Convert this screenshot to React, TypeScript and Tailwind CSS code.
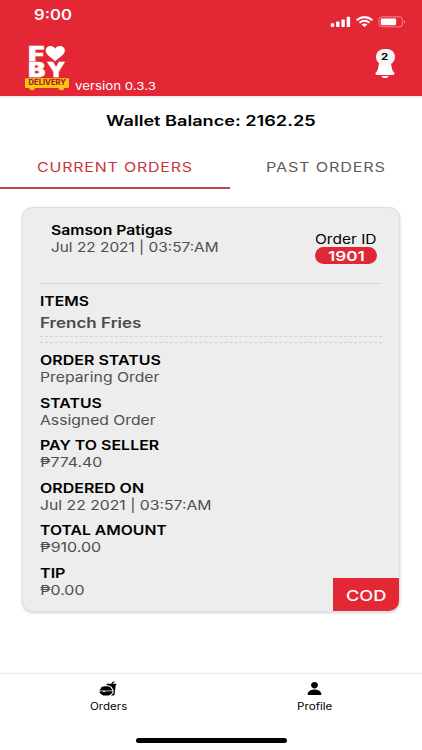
import React, { useLayoutEffect, useRef, useState } from 'react';
import { IoFastFood, IoPerson } from 'react-icons/io5';

type WideTextProps = {
  width: number;
  className?: string;
  children: React.ReactNode;
};

// Single line of text stretched horizontally to the given width
const WideText = ({ width, className = '', children }: WideTextProps) => {
  const ref = useRef<HTMLSpanElement>(null);
  const [scale, setScale] = useState(1);

  useLayoutEffect(() => {
    if (ref.current) setScale(width / ref.current.offsetWidth);
  }, [width]);

  return (
    <div className={`whitespace-nowrap ${className}`} style={{ width }}>
      <span ref={ref} className="inline-block origin-left" style={{ transform: `scaleX(${scale})` }}>
        {children}
      </span>
    </div>
  );
};

const details = [
  { label: 'ORDER STATUS', labelWidth: 120.5, value: 'Preparing Order', valueWidth: 120 },
  { label: 'STATUS', labelWidth: 62, value: 'Assigned Order', valueWidth: 116 },
  { label: 'PAY TO SELLER', labelWidth: 119, value: '₱774.40', valueWidth: 62 },
  { label: 'ORDERED ON', labelWidth: 104.5, value: 'Jul 22 2021 | 03:57:AM', valueWidth: 172 },
  { label: 'TOTAL AMOUNT', labelWidth: 127, value: '₱910.00', valueWidth: 61.5 },
  { label: 'TIP', labelWidth: 26, value: '₱0.00', valueWidth: 44 },
];

const Logo = () => (
  <svg className="h-[46px] w-[46px] overflow-visible" viewBox="0 0 46 46">
    <g fill="#fff" stroke="#fff" strokeWidth="0.5" fontFamily="Inter, sans-serif" fontWeight="900" fontSize="20">
      <text x="3.3" y="15.7" textLength="16" lengthAdjust="spacingAndGlyphs">F</text>
      <text x="3.3" y="32" textLength="17" lengthAdjust="spacingAndGlyphs">B</text>
      <text x="22" y="32" textLength="18" lengthAdjust="spacingAndGlyphs">Y</text>
    </g>
    <path
      d="M30.2 16.3 C27 13 20.7 10 20.7 5.6 C20.7 2.8 23 1 25.5 1 C27.6 1 29.4 2 30.2 3.8 C31 2 32.8 1 35 1 C37.6 1 39.9 2.8 39.9 5.6 C39.9 10 33.4 13 30.2 16.3 Z"
      fill="#fff"
    />
    <rect x="0" y="33.3" width="44" height="9.8" rx="1" fill="#fcc413" />
    <circle cx="7" cy="42.3" r="3" fill="#fcc413" />
    <circle cx="36.5" cy="42.3" r="3" fill="#fcc413" />
    <text
      x="3.6" y="40.4" fill="#a3271f" fontFamily="Inter, sans-serif" fontWeight="800" fontSize="7.2"
      textLength="37.4" lengthAdjust="spacingAndGlyphs"
    >
      DELIVERY
    </text>
  </svg>
);

const StatusIcons = () => (
  <svg className="h-[14px] w-[77px]" viewBox="0 0 77 14" fill="#fff">
    <rect x="0.8" y="8.3" width="3.4" height="3.7" rx="0.8" />
    <rect x="6.1" y="6.6" width="3.4" height="5.4" rx="0.8" />
    <rect x="11.4" y="4.5" width="3.4" height="7.5" rx="0.8" />
    <rect x="16.7" y="1.8" width="3.4" height="10.2" rx="0.8" />
    <g fill="none" stroke="#fff" strokeWidth="2">
      <path d="M26.5 5.2 Q34.5 -1 42.5 5.2" />
      <path d="M29.4 7.8 Q34.5 3.8 39.6 7.8" />
    </g>
    <path d="M31.6 9.6 Q34.5 7.4 37.4 9.6 L34.5 12 Z" />
    <rect x="49" y="1.9" width="23.4" height="9.9" rx="2.8" fill="none" stroke="#fff" strokeOpacity="0.5" strokeWidth="0.9" />
    <rect x="50.8" y="3.6" width="15.4" height="6.6" rx="1.4" />
    <path d="M74 5.2 Q76 6.9 74 8.6 Z" fillOpacity="0.6" />
  </svg>
);

const Bell = () => (
  <svg className="h-[30px] w-[20px]" viewBox="0 0 20 30" fill="#fff">
    <path d="M10 10 C6.5 10 4.2 12 3.7 16 C3.3 20 2.6 21.8 0.9 23.6 C0 24.6 0.4 25.9 1.8 25.9 H18.2 C19.6 25.9 20 24.6 19.1 23.6 C17.4 21.8 16.7 20 16.3 16 C15.8 12 13.5 10 10 10 Z" />
    <path d="M6.2 26.9 H13.8 C13.2 28.3 11.7 29 10 29 C8.3 29 6.8 28.3 6.2 26.9 Z" />
  </svg>
);

const Header = () => (
  <header className="h-24 bg-[#e32735] text-white shadow-[0_1px_2px_rgba(0,0,0,0.12)]">
    <div className="flex h-[42px] items-start justify-between pl-[34px] pr-[15px]">
      <WideText width={38} className="pt-[5px] text-[14px] leading-5 font-semibold">9:00</WideText>
      <div className="pt-[14.5px]">
        <StatusIcons />
      </div>
    </div>
    <div className="flex items-start justify-between pl-[25px] pr-[27px]">
      <div className="flex gap-1 pt-[3px]">
        <Logo />
        <WideText width={81} className="pt-[33px] text-[11px] leading-4">version 0.3.3</WideText>
      </div>
      <div className="relative mt-[7px]">
        <Bell />
        <div className="absolute top-0 left-[0.5px] flex h-4 w-[19px] items-center justify-center rounded-full bg-[#f5f5f5] text-black">
          <WideText width={7.5} className="-mt-[2px] text-[9px] leading-none font-bold">2</WideText>
        </div>
      </div>
    </div>
  </header>
);

const OrderCard = () => (
  <section className="relative mx-[22px] mt-[18px] h-[405px] overflow-hidden rounded-[11px] border border-[#e0e0e0] bg-[#ededed] px-[17px] shadow-[0_1px_3px_rgba(0,0,0,0.18)]">
    <div className="flex h-[76px] justify-between border-b border-[#d7d7d7] pl-[11px] pr-[5px]">
      <div className="pt-[13.5px]">
        <WideText width={121} className="text-[13px] leading-[17px] font-semibold">Samson Patigas</WideText>
        <WideText width={168} className="text-[13px] leading-4 text-[#4f4f4f]">Jul 22 2021 | 03:57:AM</WideText>
      </div>
      <div className="flex w-[62px] flex-col items-center pt-[23px]">
        <WideText width={62} className="text-[13px] leading-4">Order ID</WideText>
        <div className="flex h-[17px] w-[62px] items-center justify-center rounded-full bg-[#e02735] text-white">
          <WideText width={37} className="pt-px text-[13px] leading-[17px] font-semibold">1901</WideText>
        </div>
      </div>
    </div>
    <WideText width={49.5} className="mt-[9px] text-[13px] leading-[17px] font-semibold">ITEMS</WideText>
    <WideText width={102} className="mt-[4px] text-[14px] leading-[17px] font-semibold text-[#4b4b4b]">French Fries</WideText>
    <div className="mt-[5px] h-[7px] border-y border-dashed border-[#d2d2d2]" />
    <div className="mt-[9px] flex flex-col gap-[8.5px]">
      {details.map((item) => (
        <div key={item.label}>
          <WideText width={item.labelWidth} className="text-[13px] leading-[17px] font-semibold">{item.label}</WideText>
          <WideText width={item.valueWidth} className="text-[13px] leading-[17px] text-[#4f4f4f]">{item.value}</WideText>
        </div>
      ))}
    </div>
    <div className="absolute -right-px -bottom-px flex h-[34px] w-[67px] items-center justify-center bg-[#e32735] pr-px text-white">
      <WideText width={40} className="pt-px text-[15px] leading-5 font-medium">COD</WideText>
    </div>
  </section>
);

const App = () => {
  return (
    <main className="flex h-[750px] w-[422px] flex-col overflow-hidden bg-white font-['Inter','Liberation_Sans',sans-serif] text-black">
      <Header />
      <div className="flex justify-center pt-[15px]">
        <WideText width={210} className="text-[14.5px] leading-5 font-semibold">Wallet Balance: 2162.25</WideText>
      </div>
      <nav className="flex h-[58px]">
        <div className="flex w-[230px] justify-center border-b-2 border-[#bd4c52] pt-[26px]">
          <WideText width={156} className="text-[13px] leading-5 tracking-wider text-[#c93440]">CURRENT ORDERS</WideText>
        </div>
        <div className="flex flex-1 pt-[26px] pl-9">
          <WideText width={119.5} className="text-[13px] leading-5 tracking-wider text-[#5c5c5c]">PAST ORDERS</WideText>
        </div>
      </nav>
      <OrderCard />
      <footer className="mt-auto h-[77px] border-t border-[#ebebeb]">
        <div className="flex h-[64px] pt-[7px]">
          <div className="flex w-[216px] flex-col items-center">
            <IoFastFood className="h-[15px] w-[18px]" preserveAspectRatio="none" />
            <WideText width={37} className="mt-[2px] text-[10px] leading-4">Orders</WideText>
          </div>
          <div className="flex w-[196px] flex-col items-center">
            <IoPerson className="h-[15px] w-[17px]" preserveAspectRatio="none" />
            <WideText width={35} className="mt-[2px] text-[10px] leading-4">Profile</WideText>
          </div>
        </div>
        <div className="mx-auto h-[5px] w-[151px] rounded-full bg-black" />
      </footer>
    </main>
  );
};

export default App;
